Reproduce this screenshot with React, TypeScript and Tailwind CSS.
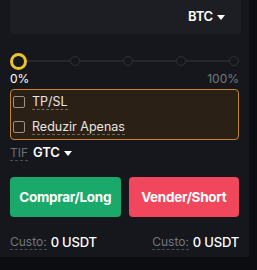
import React from "react";

function Caret() {
  return (
    <svg width="8" height="5" viewBox="0 0 8 5" className="ml-[4px]">
      <path d="M0 0 L8 0 L4 5 Z" fill="#ffffff" />
    </svg>
  );
}

function Check({ label }: { label: string }) {
  return (
    <div className="flex items-center h-[25px]">
      <div className="w-[12px] h-[12px] border border-[#9a9288] rounded-[2px] ml-[2px]" />
      <span className="ml-[7px] text-[12.5px] text-[#e9e6e1] leading-[15px] border-b border-dashed border-[#6f6a63]">
        {label}
      </span>
    </div>
  );
}

export default function App() {
  return (
    <div className="w-[257px] h-[270px] bg-[#0c0d10] overflow-hidden" style={{ fontFamily: "Inter, 'Noto Sans', sans-serif" }}>
      <div className="w-[249px] h-[257px] bg-[#16171c] px-[10px] flex flex-col">
        <div className="w-[231px] h-[34px] bg-[#1c1e23] rounded-b-[4px] flex items-center justify-end pr-[16px] shrink-0">
          <span className="text-[13px] font-semibold text-white tracking-[-0.2px]">BTC</span>
          <Caret />
        </div>
        <div className="relative mt-[19px] h-[16px] flex items-center justify-between shrink-0">
          <div className="absolute left-[8px] right-[4px] top-[7px] h-[2px] bg-[#25272d]" />
          <div className="relative w-[17px] h-[17px] rounded-full border-[3.5px] border-[#e9c230] bg-[#16171c]" />
          <div className="relative w-[10px] h-[10px] rounded-full border-[1.5px] border-[#2f3137] bg-[#16171c]" />
          <div className="relative w-[10px] h-[10px] rounded-full border-[1.5px] border-[#2f3137] bg-[#16171c]" />
          <div className="relative w-[10px] h-[10px] rounded-full border-[1.5px] border-[#2f3137] bg-[#16171c]" />
          <div className="relative w-[10px] h-[10px] rounded-full border-[1.5px] border-[#2f3137] bg-[#16171c]" />
        </div>
        <div className="mt-[3px] flex justify-between text-[12px] leading-[14px] shrink-0">
          <span className="text-white">0%</span>
          <span className="text-[#74777e]">100%</span>
        </div>
        <div className="mt-[3px] h-[51px] border-[1.5px] border-[#c8842c] rounded-[4px] bg-[#2a2016] flex flex-col justify-center shrink-0">
          <Check label="TP/SL" />
          <Check label="Reduzir Apenas" />
        </div>
        <div className="mt-[2px] h-[22px] flex items-center shrink-0">
          <span className="text-[12px] leading-[14px] text-[#6c6f76] border-b border-dashed border-[#4a4d54]">TIF</span>
          <span className="ml-[5px] text-[13px] font-semibold text-white tracking-[-0.2px]">GTC</span>
          <Caret />
        </div>
        <div className="mt-[13px] flex gap-[8px] shrink-0">
          <button className="flex-1 h-[40px] rounded-[4px] bg-[#1ba86b] text-white text-[13.5px] font-bold tracking-[-0.3px]">Comprar/Long</button>
          <button className="flex-1 h-[40px] rounded-[4px] bg-[#f0475c] text-white text-[13.5px] font-bold tracking-[-0.3px]">Vender/Short</button>
        </div>
        <div className="mt-[16px] flex justify-between items-center shrink-0">
          <div className="flex items-center">
            <span className="text-[12px] leading-[14px] text-[#73767d] border-b border-dashed border-[#4a4d54]">Custo:</span>
            <span className="ml-[4px] text-[13px] font-medium text-white tracking-[-0.2px]">0 USDT</span>
          </div>
          <div className="flex items-center">
            <span className="text-[12px] leading-[14px] text-[#73767d] border-b border-dashed border-[#4a4d54]">Custo:</span>
            <span className="ml-[4px] text-[13px] font-medium text-white tracking-[-0.2px]">0 USDT</span>
          </div>
        </div>
      </div>
    </div>
  );
}
